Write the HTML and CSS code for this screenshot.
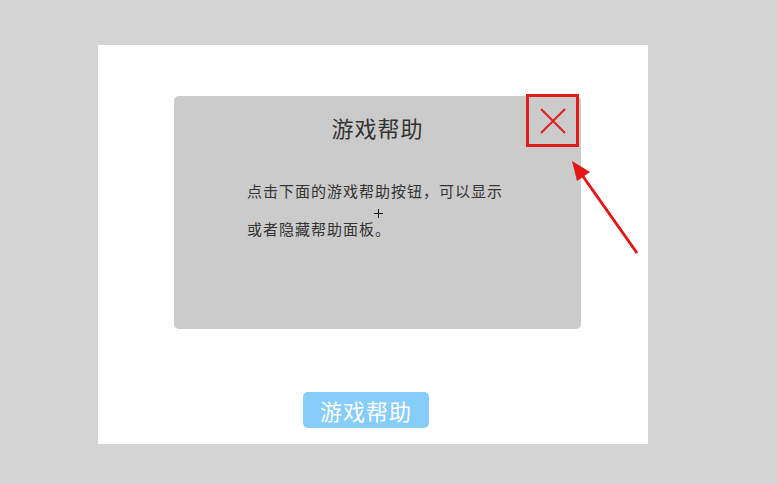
FILE: index.html
```html
<!DOCTYPE html>
<html lang="zh-CN">
<head>
  <meta charset="UTF-8" />
  <title>游戏帮助</title>
  <link rel="stylesheet" href="styles.css">
</head>
<body>
  <div class="stage">
    <div class="help-panel">
      <h2 class="help-title">游戏帮助</h2>
      <p class="help-text">点击下面的游戏帮助按钮，可以显示</p>
      <p class="help-text">或者隐藏帮助面板。</p>
      <div class="close-box">
        <svg width="26" height="26" viewBox="0 0 26 26">
          <path d="M1 1 L25 25 M25 1 L1 25" stroke="#e02020" stroke-width="2" fill="none" />
        </svg>
      </div>
      <span class="cursor"></span>
    </div>

    <button class="help-btn">游戏帮助</button>

    <svg class="arrow" width="80" height="100" viewBox="0 0 80 100">
      <line x1="73" y1="96" x2="18" y2="18" stroke="#e01818" stroke-width="3" />
      <polygon points="8,4 26,15 13,24" fill="#e01818" />
    </svg>
  </div>
</body>
</html>
```

FILE: styles.css
```css
body {
  margin: 0;
  background: #d4d4d4;
  font-family: "Noto Sans CJK SC", "Noto Sans", sans-serif;
  height: 484px;
  overflow: hidden;
}
.stage {
  position: relative;
  width: 550px;
  height: 399px;
  margin: 45px 0 0 98px;
  background: #fff;
  padding-top: 51px;
  box-sizing: border-box;
}
.help-panel {
  position: relative;
  width: 407px;
  height: 233px;
  margin-left: 76px;
  background: #cbcbcb;
  border-radius: 5px;
  padding: 18px 0 0 73px;
  box-sizing: border-box;
}
.help-title {
  margin: 0 0 32px -73px;
  text-align: center;
  font-size: 22px;
  font-weight: normal;
  line-height: 26px;
  letter-spacing: 1px;
  color: #333;
}
.help-text {
  margin: 0;
  font-size: 15px;
  line-height: 38px;
  letter-spacing: 1px;
  color: #333;
}
.close-box {
  position: absolute;
  left: 352px;
  top: -2px;
  width: 53px;
  height: 53px;
  border: 3px solid #e01c1c;
  box-sizing: border-box;
  display: flex;
  align-items: center;
  justify-content: center;
}
.cursor {
  position: absolute;
  left: 200px;
  top: 113px;
  width: 9px;
  height: 9px;
  background:
    linear-gradient(#111, #111) center / 9px 1px no-repeat,
    linear-gradient(#111, #111) center / 1px 9px no-repeat;
}
.help-btn {
  display: block;
  margin: 63px 0 0 205px;
  width: 126px;
  height: 36px;
  border: none;
  border-radius: 5px;
  background: #87cdfa;
  color: #fff;
  font-family: "Noto Sans CJK SC", sans-serif;
  font-size: 22px;
  letter-spacing: 1px;
  padding: 0;
}
.arrow {
  position: absolute;
  left: 466px;
  top: 112px;
}
```
